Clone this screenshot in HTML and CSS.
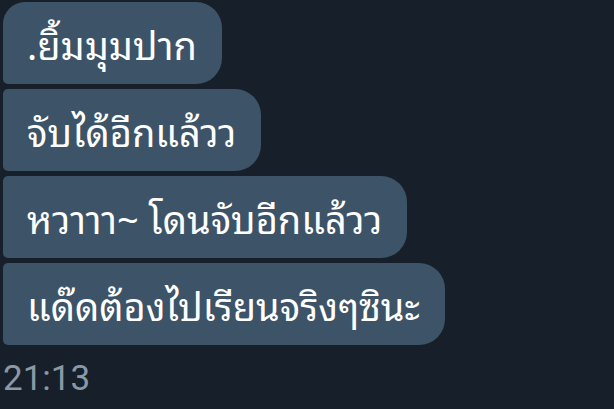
FILE: index.html
```html
<!DOCTYPE html>
<html lang="th">
<head>
<meta charset="utf-8">
<link rel="stylesheet" href="styles.css">
</head>
<body>
<div class="chat">
  <div class="group">
    <div class="bubble first">.ยิ้มมุมปาก</div>
    <div class="bubble">จับได้อีกแล้วว</div>
    <div class="bubble">หวาาา~ โดนจับอีกแล้วว</div>
    <div class="bubble last">แด๊ดต้องไปเรียนจริงๆซินะ</div>
  </div>
  <div class="time">21:13</div>
</div>
</body>
</html>
```
FILE: styles.css
```css
html, body {
  margin: 0;
  padding: 0;
  background: #17202a;
  width: 614px;
  height: 409px;
  overflow: hidden;
}
.chat {
  padding: 2px 0 0 3px;
  display: flex;
  flex-direction: column;
}
.group {
  display: flex;
  flex-direction: column;
  align-items: flex-start;
  gap: 5px;
}
.bubble {
  background: #3d5367;
  color: #ffffff;
  font-family: "Noto Sans Thai Looped", "Noto Sans Thai", Roboto, sans-serif;
  font-size: 38px;
  line-height: 82px;
  height: 82px;
  padding: 0 25px 0 24px;
  border-radius: 5px 26px 26px 5px;
  white-space: nowrap;
}
.bubble.first {
  border-top-left-radius: 22px;
}
.time {
  margin-top: 14px;
  font-family: Roboto, "Noto Sans", sans-serif;
  font-size: 35px;
  color: #8b98a5;
  line-height: 40px;
}
```
